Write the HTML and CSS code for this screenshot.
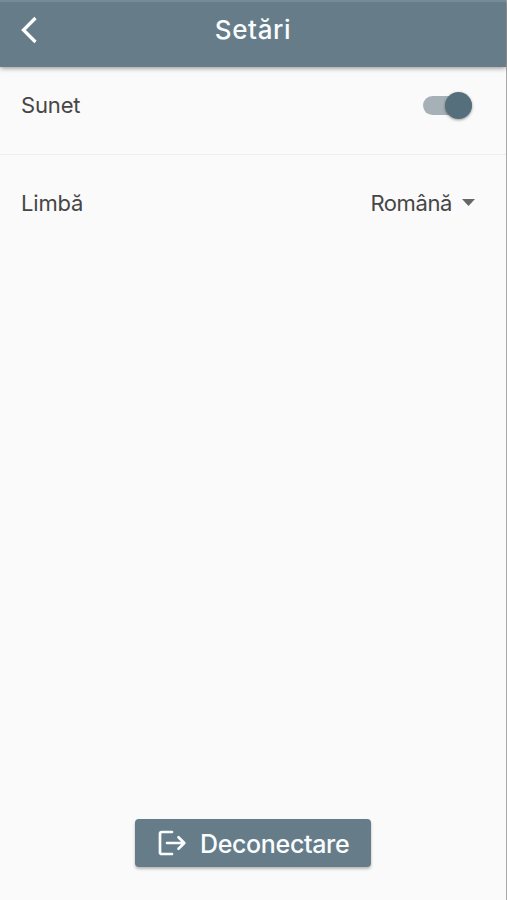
FILE: index.html
```html
<!DOCTYPE html>
<html lang="ro">
<head>
<meta charset="utf-8">
<title>Setări</title>
<link rel="stylesheet" href="styles.css">
</head>
<body>
<div class="screen">
  <header class="app-bar">
    <button class="back" aria-label="Înapoi"><svg width="18" height="28" viewBox="0 0 18 28"><path d="M15.5 2 3.5 14 15.5 26"/></svg></button>
    <h1 class="title"><span>Setări</span></h1>
  </header>
  <main class="settings">
    <div class="row row-sound">
      <span class="label">Sunet</span>
      <span class="switch" role="switch" aria-checked="true"><span class="thumb"></span></span>
    </div>
    <div class="row row-language">
      <span class="label">Limbă</span>
      <span class="select"><span class="value">Română</span><svg width="13" height="7" viewBox="0 0 13 7"><path d="M0 0H13L6.5 7Z"/></svg></span>
    </div>
  </main>
  <footer class="footer">
    <button class="logout">
      <svg width="29" height="27" viewBox="0 0 29 27"><path d="M14 2H3.8Q2 2 2 3.8V22.2Q2 24 3.8 24H14M9 13H26M20.5 7.2 26.3 13 20.5 18.8"/></svg>
      <span class="logout-label">Deconectare</span>
    </button>
  </footer>
</div>
</body>
</html>
```
FILE: styles.css
```css
* { box-sizing: border-box; }
body {
  margin: 0;
  background: #fafafa;
  color: #464646;
  font-family: Inter, "Liberation Sans", sans-serif;
}
button { border: 0; padding: 0; font: inherit; color: inherit; background: none; }
svg { display: block; }
.screen {
  height: 900px;
  display: flex;
  flex-direction: column;
  border-right: 1px solid #a9a9a9;
}
.app-bar {
  display: grid;
  grid-template-columns: 60px 1fr 60px;
  height: 67px;
  padding-bottom: 10px;
  align-items: center;
  background: #667d89;
  border-top: 2px solid #768b95;
  box-shadow: 0 1px 5px rgba(0, 0, 0, .45);
  color: #fafdff;
}
.back { padding-left: 20px; }
.back svg { fill: none; stroke: #fff; stroke-width: 3.3; }
.title {
  margin: 0;
  text-align: center;
  font-size: 26px;
  line-height: 32px;
  font-weight: 500;
  letter-spacing: .6px;
}
.settings { flex: 1; }
.row {
  display: flex;
  align-items: center;
  justify-content: space-between;
  padding: 0 31px 1px 21px;
  font-size: 22px;
  line-height: 28px;
}
.row-sound { height: 88px; padding: 0 34px 11px 21px; border-bottom: 1px solid #eee; }
.row-language { height: 96px; }
.label { letter-spacing: -.15px; }
.value { letter-spacing: -.4px; }
.switch {
  display: flex;
  align-items: center;
  justify-content: flex-end;
  width: 49px;
  height: 19px;
  border-radius: 10px;
  background: #a6b1b7;
}
.thumb {
  width: 27px;
  height: 27px;
  border-radius: 50%;
  background: #566f7c;
  box-shadow: 0 1px 3px rgba(0, 0, 0, .4);
}
.select { display: flex; align-items: center; gap: 10px; }
.select svg { fill: #666; }
.footer { display: flex; justify-content: center; padding-bottom: 33px; }
.logout {
  display: flex;
  align-items: center;
  gap: 13px;
  width: 236px;
  height: 48px;
  padding-left: 23px;
  border-radius: 4px;
  background: #667d89;
  box-shadow: 0 2px 3px rgba(0, 0, 0, .27);
  color: #fafdff;
  font-size: 25px;
  font-weight: 500;
}
.logout-label { padding-top: 2px; letter-spacing: -.35px; }
.logout svg { fill: none; stroke: #fafdff; stroke-width: 2.7; stroke-linecap: round; stroke-linejoin: round; }
```
